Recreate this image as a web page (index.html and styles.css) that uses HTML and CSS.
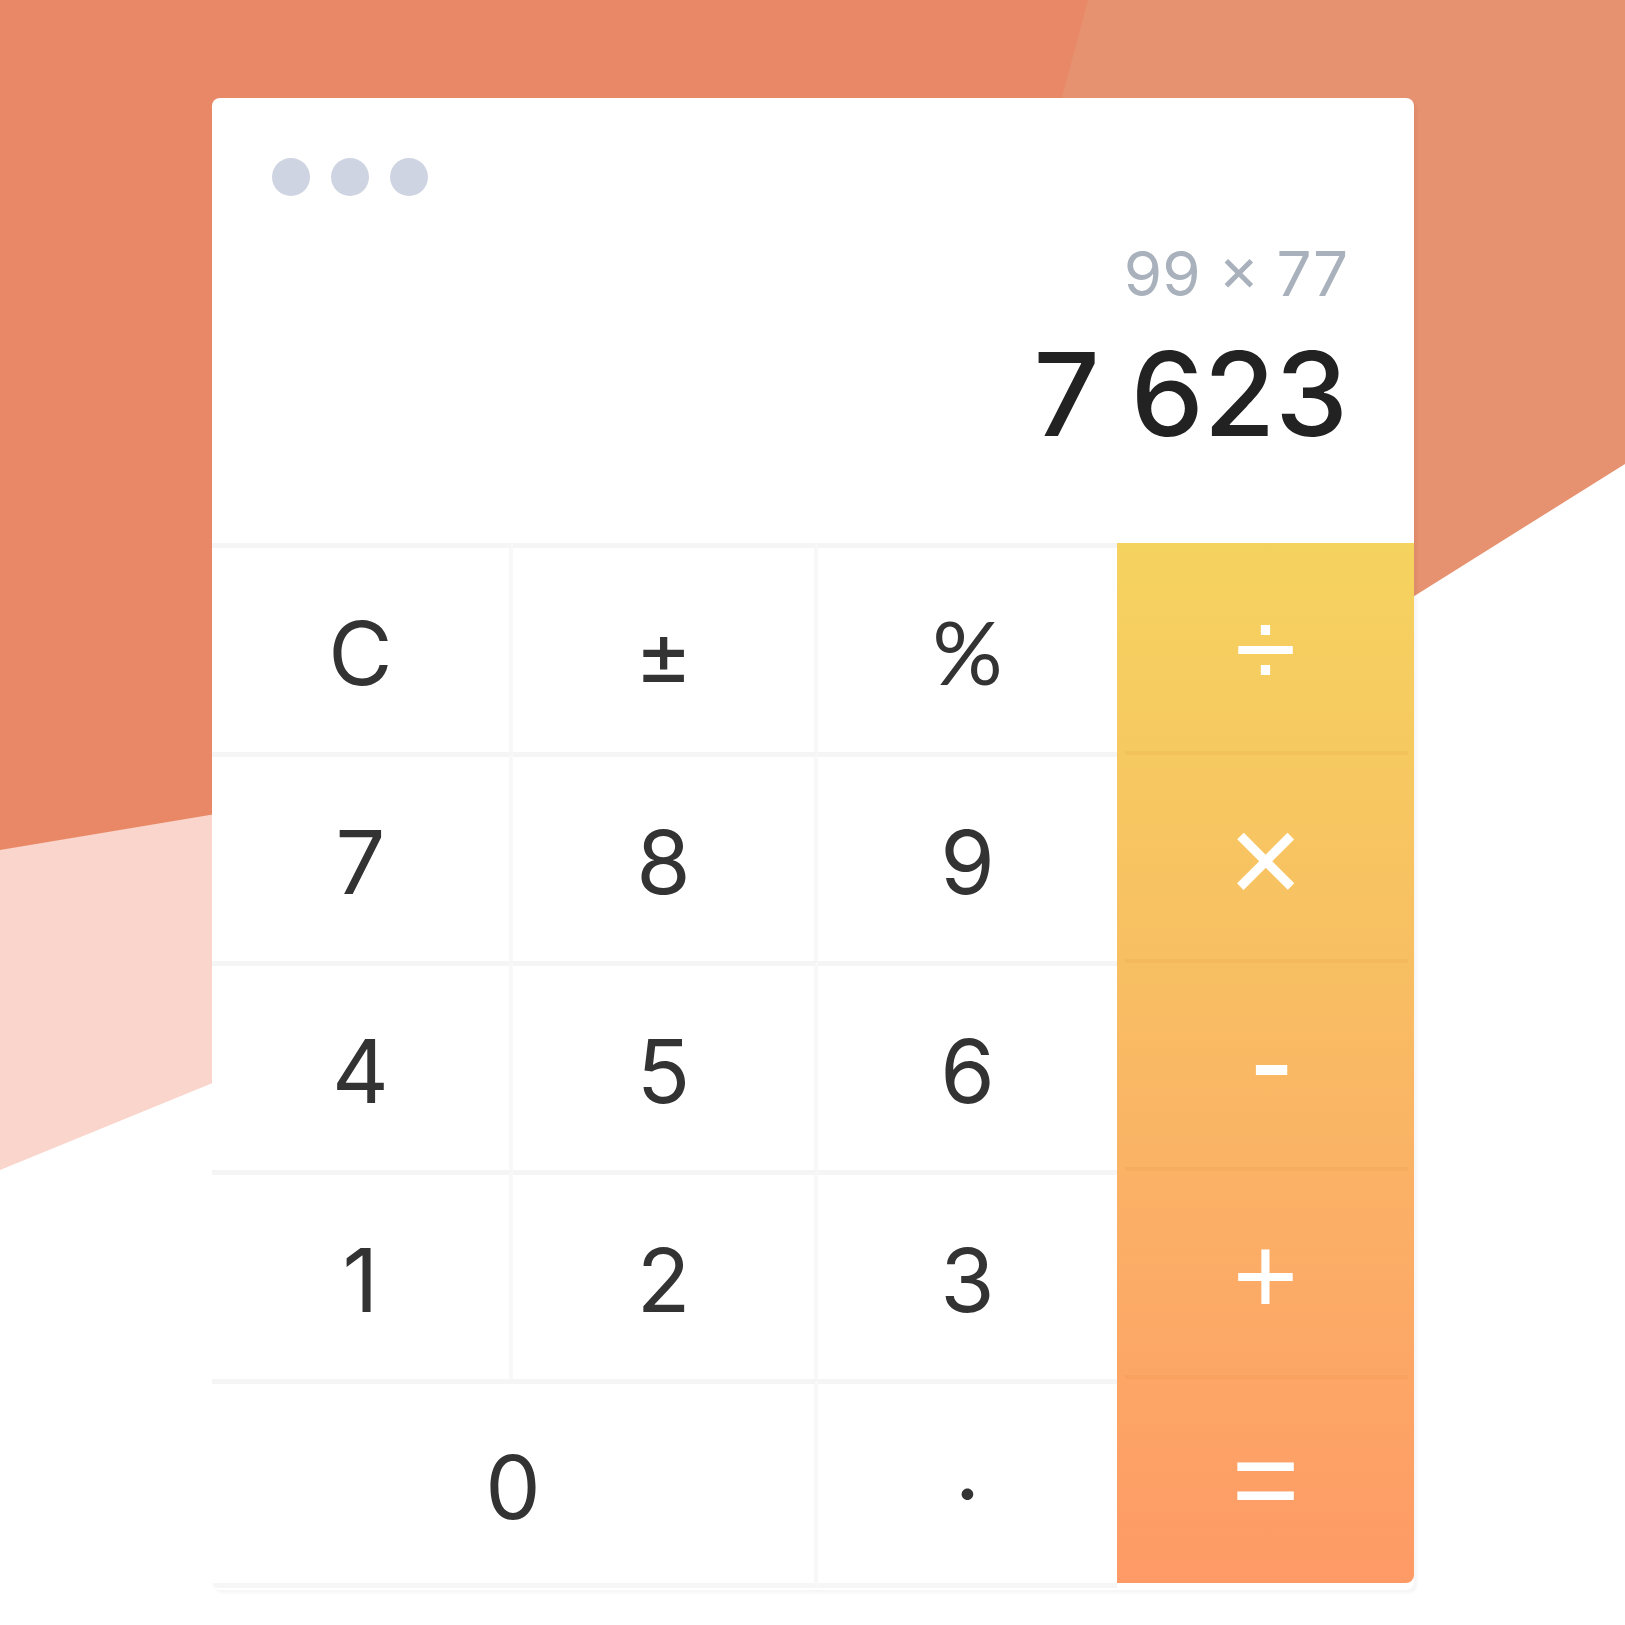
FILE: index.html
```html
<!DOCTYPE html>
<html lang="en">
<head>
<meta charset="utf-8">
<title>Calculator</title>
<link rel="stylesheet" href="styles.css">
</head>
<body>
<svg class="backdrop" width="1625" height="1625" viewBox="0 0 1625 1625" aria-hidden="true">
  <path d="M0,700 L420,700 L420,998 L0,1170 Z" fill="#f9d5cb"/>
  <path d="M0,0 L1090,0 L900,700 L300,800 L0,850 Z" fill="#e98866"/>
  <path d="M1088,0 L1625,0 L1625,464 L1400,605 L900,700 Z" fill="#e6916f"/>
</svg>
<main class="calc">
  <section class="display">
    <div class="dots"><span class="dot"></span><span class="dot"></span><span class="dot"></span></div>
    <div class="expr">99 x 77</div>
    <div class="result">7 623</div>
  </section>
  <section class="keypad">
    <div class="digits">
      <button class="key">C</button>
      <button class="key">±</button>
      <button class="key key-pct">%</button>
      <button class="key">7</button>
      <button class="key">8</button>
      <button class="key">9</button>
      <button class="key">4</button>
      <button class="key">5</button>
      <button class="key">6</button>
      <button class="key">1</button>
      <button class="key">2</button>
      <button class="key">3</button>
      <button class="key key-zero">0</button>
      <button class="key key-dot">.</button>
    </div>
    <div class="ops">
      <button class="op op-div">÷</button>
      <button class="op op-mul">×</button>
      <button class="op op-sub">-</button>
      <button class="op op-add">+</button>
      <button class="op op-eq">=</button>
    </div>
  </section>
</main>
</body>
</html>
```

FILE: styles.css
```css
html, body {
  margin: 0;
  padding: 0;
}

body {
  position: relative;
  width: 1625px;
  height: 1625px;
  overflow: hidden;
  background: #ffffff;
  font-family: Inter, "Liberation Sans", Arial, sans-serif;
  padding: 98px 0 0 212px;
  box-sizing: border-box;
}

.backdrop {
  position: absolute;
  left: 0;
  top: 0;
  z-index: 0;
}

.calc {
  position: relative;
  z-index: 1;
  width: 1202px;
  height: 1492px;
  background: #ffffff;
  border-radius: 8px;
  overflow: hidden;
  box-shadow: 3px 3px 3px rgba(0, 0, 0, 0.04);
  display: flex;
  flex-direction: column;
}

.display {
  height: 445px;
  box-sizing: border-box;
  padding: 60px 66px 0 60px;
  display: flex;
  flex-direction: column;
}

.dots {
  display: flex;
  gap: 21px;
}

.dot {
  width: 38px;
  height: 38px;
  border-radius: 50%;
  background: #cfd4e2;
}

.expr {
  margin-top: 47px;
  text-align: right;
  font-size: 62px;
  line-height: 1;
  color: #a9b1bc;
}

.result {
  margin-top: 31px;
  text-align: right;
  font-size: 116px;
  font-weight: 500;
  line-height: 1;
  color: #222222;
}

.keypad {
  display: flex;
  height: 1047px;
}

.digits {
  width: 905px;
  display: grid;
  grid-template-columns: 301px 305px 299px;
  grid-template-rows: repeat(5, 209px);
}

.key {
  appearance: none;
  margin: 0;
  padding: 6px 0 0 0;
  background: #ffffff;
  border: 0;
  border-top: 5px solid #f5f5f5;
  border-right: 4px solid #f8f8f8;
  font-family: inherit;
  font-size: 88px;
  line-height: 1;
  color: #333333;
  display: flex;
  align-items: center;
  justify-content: center;
}

.key:nth-child(3n) {
  border-right: 0;
}

.key-pct {
  font-family: Lato, "Liberation Sans", sans-serif;
  font-size: 88px;
  padding-top: 2px;
}

.key-zero {
  grid-column: span 2;
}

.key-dot {
  border-right: 0;
  padding: 0 0 34px 0;
}

.key:nth-child(n+13) {
  border-bottom: 5px solid #f6f6f6;
}

.ops {
  width: 297px;
  display: flex;
  flex-direction: column;
  background: linear-gradient(180deg, #f5d35f 0%, #f8bf62 40%, #fbaf66 65%, #fe9a66 100%);
  border-bottom-right-radius: 8px;
  height: 1040px;
}

.op {
  appearance: none;
  position: relative;
  margin: 0;
  padding: 0;
  height: 208px;
  background: transparent;
  border: 0;
  font-family: "Liberation Sans", Arial, sans-serif;
  line-height: 1;
  color: #ffffff;
  display: flex;
  align-items: center;
  justify-content: center;
}

.op + .op::before {
  content: "";
  position: absolute;
  left: 8px;
  right: 6px;
  top: 0;
  height: 4px;
  background: rgba(200, 110, 30, 0.07);
}

.op-div {
  font-size: 112px;
  padding-top: 4px;
}

.op-mul {
  font-size: 128px;
  padding-top: 10px;
}

.op-sub {
  font-size: 128px;
  padding: 0 0 6px 12px;
}

.op-add {
  font-size: 112px;
  padding-top: 10px;
}

.op-eq {
  font-size: 116px;
  padding-top: 2px;
}
```
